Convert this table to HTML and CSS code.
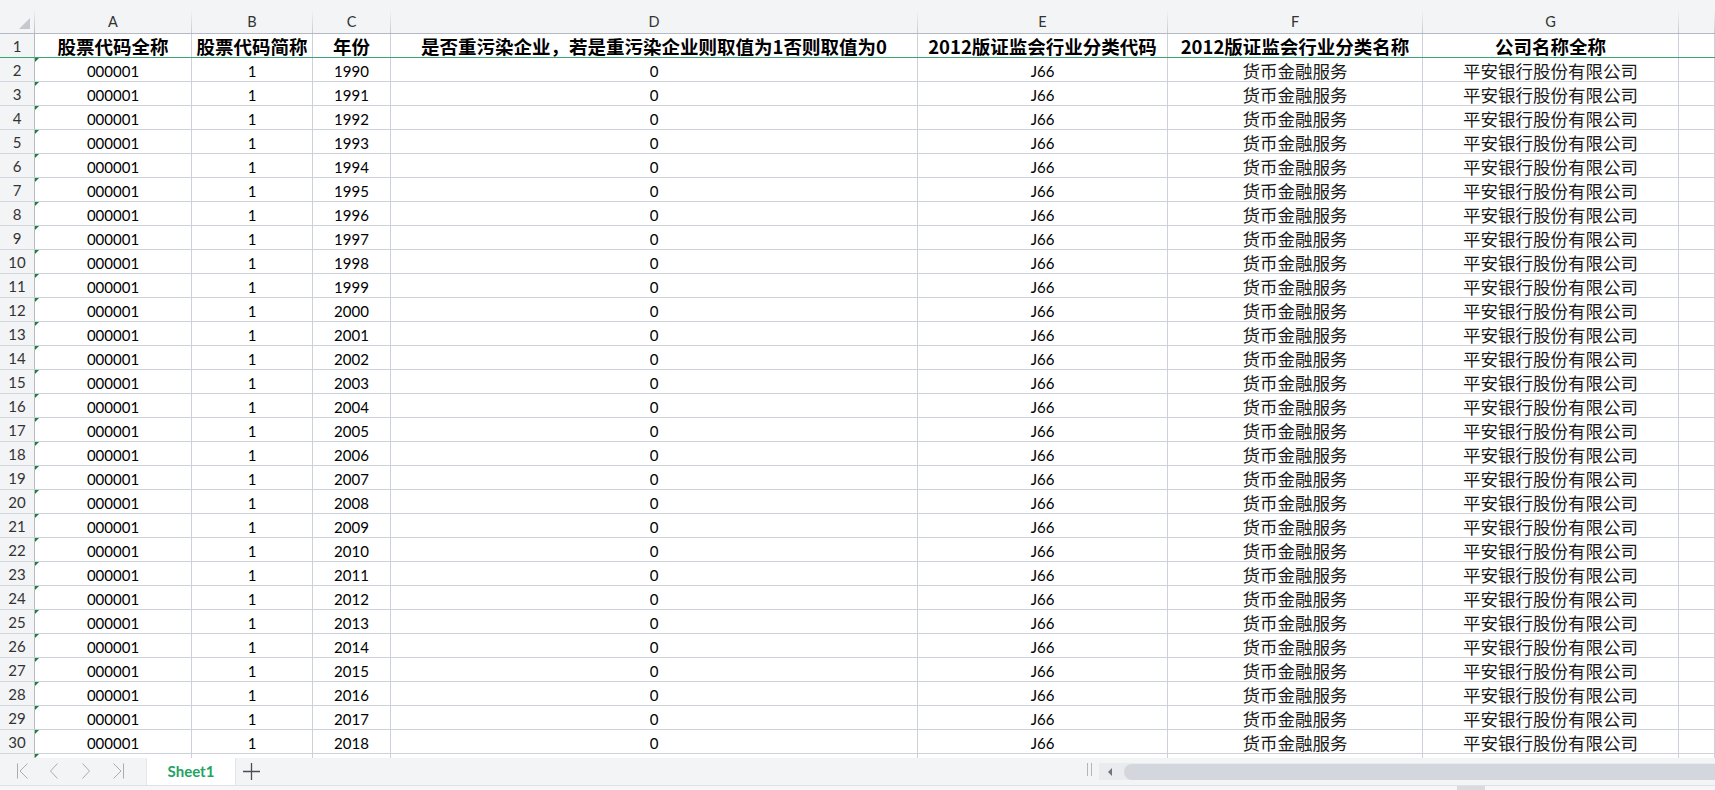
FILE: index.html
```html
<!DOCTYPE html>
<html lang="zh-CN">
<head>
<meta charset="utf-8">
<title>Sheet1</title>
<link rel="stylesheet" href="styles.css">
</head>
<body>
<div class="app">
  <div class="sheet">
    <div class="row colhdr">
      <div class="corner"><span class="corner-tri"></span></div>
      <div class="ch">A</div><div class="ch">B</div><div class="ch">C</div><div class="ch">D</div><div class="ch">E</div><div class="ch">F</div><div class="ch">G</div><div class="ch"></div>
    </div>
    <div class="row hdr1">
      <div class="rh">1</div>
      <div class="c hb">股票代码全称</div>
      <div class="c hb">股票代码简称</div>
      <div class="c hb">年份</div>
      <div class="c hb">是否重污染企业，若是重污染企业则取值为1否则取值为0</div>
      <div class="c hb">2012版证监会行业分类代码</div>
      <div class="c hb">2012版证监会行业分类名称</div>
      <div class="c hb">公司名称全称</div>
      <div class="c"></div>
    </div>
    <div class="row"><div class="rh">2</div><div class="c a">000001</div><div class="c">1</div><div class="c">1990</div><div class="c">0</div><div class="c">J66</div><div class="c cj">货币金融服务</div><div class="c cj">平安银行股份有限公司</div><div class="c"></div></div>
    <div class="row"><div class="rh">3</div><div class="c a">000001</div><div class="c">1</div><div class="c">1991</div><div class="c">0</div><div class="c">J66</div><div class="c cj">货币金融服务</div><div class="c cj">平安银行股份有限公司</div><div class="c"></div></div>
    <div class="row"><div class="rh">4</div><div class="c a">000001</div><div class="c">1</div><div class="c">1992</div><div class="c">0</div><div class="c">J66</div><div class="c cj">货币金融服务</div><div class="c cj">平安银行股份有限公司</div><div class="c"></div></div>
    <div class="row"><div class="rh">5</div><div class="c a">000001</div><div class="c">1</div><div class="c">1993</div><div class="c">0</div><div class="c">J66</div><div class="c cj">货币金融服务</div><div class="c cj">平安银行股份有限公司</div><div class="c"></div></div>
    <div class="row"><div class="rh">6</div><div class="c a">000001</div><div class="c">1</div><div class="c">1994</div><div class="c">0</div><div class="c">J66</div><div class="c cj">货币金融服务</div><div class="c cj">平安银行股份有限公司</div><div class="c"></div></div>
    <div class="row"><div class="rh">7</div><div class="c a">000001</div><div class="c">1</div><div class="c">1995</div><div class="c">0</div><div class="c">J66</div><div class="c cj">货币金融服务</div><div class="c cj">平安银行股份有限公司</div><div class="c"></div></div>
    <div class="row"><div class="rh">8</div><div class="c a">000001</div><div class="c">1</div><div class="c">1996</div><div class="c">0</div><div class="c">J66</div><div class="c cj">货币金融服务</div><div class="c cj">平安银行股份有限公司</div><div class="c"></div></div>
    <div class="row"><div class="rh">9</div><div class="c a">000001</div><div class="c">1</div><div class="c">1997</div><div class="c">0</div><div class="c">J66</div><div class="c cj">货币金融服务</div><div class="c cj">平安银行股份有限公司</div><div class="c"></div></div>
    <div class="row"><div class="rh">10</div><div class="c a">000001</div><div class="c">1</div><div class="c">1998</div><div class="c">0</div><div class="c">J66</div><div class="c cj">货币金融服务</div><div class="c cj">平安银行股份有限公司</div><div class="c"></div></div>
    <div class="row"><div class="rh">11</div><div class="c a">000001</div><div class="c">1</div><div class="c">1999</div><div class="c">0</div><div class="c">J66</div><div class="c cj">货币金融服务</div><div class="c cj">平安银行股份有限公司</div><div class="c"></div></div>
    <div class="row"><div class="rh">12</div><div class="c a">000001</div><div class="c">1</div><div class="c">2000</div><div class="c">0</div><div class="c">J66</div><div class="c cj">货币金融服务</div><div class="c cj">平安银行股份有限公司</div><div class="c"></div></div>
    <div class="row"><div class="rh">13</div><div class="c a">000001</div><div class="c">1</div><div class="c">2001</div><div class="c">0</div><div class="c">J66</div><div class="c cj">货币金融服务</div><div class="c cj">平安银行股份有限公司</div><div class="c"></div></div>
    <div class="row"><div class="rh">14</div><div class="c a">000001</div><div class="c">1</div><div class="c">2002</div><div class="c">0</div><div class="c">J66</div><div class="c cj">货币金融服务</div><div class="c cj">平安银行股份有限公司</div><div class="c"></div></div>
    <div class="row"><div class="rh">15</div><div class="c a">000001</div><div class="c">1</div><div class="c">2003</div><div class="c">0</div><div class="c">J66</div><div class="c cj">货币金融服务</div><div class="c cj">平安银行股份有限公司</div><div class="c"></div></div>
    <div class="row"><div class="rh">16</div><div class="c a">000001</div><div class="c">1</div><div class="c">2004</div><div class="c">0</div><div class="c">J66</div><div class="c cj">货币金融服务</div><div class="c cj">平安银行股份有限公司</div><div class="c"></div></div>
    <div class="row"><div class="rh">17</div><div class="c a">000001</div><div class="c">1</div><div class="c">2005</div><div class="c">0</div><div class="c">J66</div><div class="c cj">货币金融服务</div><div class="c cj">平安银行股份有限公司</div><div class="c"></div></div>
    <div class="row"><div class="rh">18</div><div class="c a">000001</div><div class="c">1</div><div class="c">2006</div><div class="c">0</div><div class="c">J66</div><div class="c cj">货币金融服务</div><div class="c cj">平安银行股份有限公司</div><div class="c"></div></div>
    <div class="row"><div class="rh">19</div><div class="c a">000001</div><div class="c">1</div><div class="c">2007</div><div class="c">0</div><div class="c">J66</div><div class="c cj">货币金融服务</div><div class="c cj">平安银行股份有限公司</div><div class="c"></div></div>
    <div class="row"><div class="rh">20</div><div class="c a">000001</div><div class="c">1</div><div class="c">2008</div><div class="c">0</div><div class="c">J66</div><div class="c cj">货币金融服务</div><div class="c cj">平安银行股份有限公司</div><div class="c"></div></div>
    <div class="row"><div class="rh">21</div><div class="c a">000001</div><div class="c">1</div><div class="c">2009</div><div class="c">0</div><div class="c">J66</div><div class="c cj">货币金融服务</div><div class="c cj">平安银行股份有限公司</div><div class="c"></div></div>
    <div class="row"><div class="rh">22</div><div class="c a">000001</div><div class="c">1</div><div class="c">2010</div><div class="c">0</div><div class="c">J66</div><div class="c cj">货币金融服务</div><div class="c cj">平安银行股份有限公司</div><div class="c"></div></div>
    <div class="row"><div class="rh">23</div><div class="c a">000001</div><div class="c">1</div><div class="c">2011</div><div class="c">0</div><div class="c">J66</div><div class="c cj">货币金融服务</div><div class="c cj">平安银行股份有限公司</div><div class="c"></div></div>
    <div class="row"><div class="rh">24</div><div class="c a">000001</div><div class="c">1</div><div class="c">2012</div><div class="c">0</div><div class="c">J66</div><div class="c cj">货币金融服务</div><div class="c cj">平安银行股份有限公司</div><div class="c"></div></div>
    <div class="row"><div class="rh">25</div><div class="c a">000001</div><div class="c">1</div><div class="c">2013</div><div class="c">0</div><div class="c">J66</div><div class="c cj">货币金融服务</div><div class="c cj">平安银行股份有限公司</div><div class="c"></div></div>
    <div class="row"><div class="rh">26</div><div class="c a">000001</div><div class="c">1</div><div class="c">2014</div><div class="c">0</div><div class="c">J66</div><div class="c cj">货币金融服务</div><div class="c cj">平安银行股份有限公司</div><div class="c"></div></div>
    <div class="row"><div class="rh">27</div><div class="c a">000001</div><div class="c">1</div><div class="c">2015</div><div class="c">0</div><div class="c">J66</div><div class="c cj">货币金融服务</div><div class="c cj">平安银行股份有限公司</div><div class="c"></div></div>
    <div class="row"><div class="rh">28</div><div class="c a">000001</div><div class="c">1</div><div class="c">2016</div><div class="c">0</div><div class="c">J66</div><div class="c cj">货币金融服务</div><div class="c cj">平安银行股份有限公司</div><div class="c"></div></div>
    <div class="row"><div class="rh">29</div><div class="c a">000001</div><div class="c">1</div><div class="c">2017</div><div class="c">0</div><div class="c">J66</div><div class="c cj">货币金融服务</div><div class="c cj">平安银行股份有限公司</div><div class="c"></div></div>
    <div class="row"><div class="rh">30</div><div class="c a">000001</div><div class="c">1</div><div class="c">2018</div><div class="c">0</div><div class="c">J66</div><div class="c cj">货币金融服务</div><div class="c cj">平安银行股份有限公司</div><div class="c"></div></div>
    <div class="row"><div class="rh"></div><div class="c a"></div><div class="c"></div><div class="c"></div><div class="c"></div><div class="c"></div><div class="c"></div><div class="c"></div><div class="c"></div></div>
  </div>

  <div class="tabbar">
    <div class="nav">
      <span class="navbtn"><svg width="13" height="16" viewBox="0 0 13 16"><path d="M1.5 0.5V15.5M11.5 0.5L4 8L11.5 15.5" fill="none" stroke="#a9acb3" stroke-width="1"/></svg></span>
      <span class="navbtn"><svg width="10" height="16" viewBox="0 0 10 16"><path d="M8.5 0.5L1.5 8L8.5 15.5" fill="none" stroke="#a9acb3" stroke-width="1"/></svg></span>
      <span class="navbtn"><svg width="10" height="16" viewBox="0 0 10 16"><path d="M1.5 0.5L8.5 8L1.5 15.5" fill="none" stroke="#a9acb3" stroke-width="1"/></svg></span>
      <span class="navbtn"><svg width="13" height="16" viewBox="0 0 13 16"><path d="M1.5 0.5L9 8L1.5 15.5M11.5 0.5V15.5" fill="none" stroke="#a9acb3" stroke-width="1"/></svg></span>
    </div>
    <div class="tab">Sheet1</div>
    <div class="add"><svg width="17" height="17" viewBox="0 0 17 17"><path d="M8.5 0V17M0 8.5H17" fill="none" stroke="#4b4e56" stroke-width="1.3"/></svg></div>
    <div class="spacer"></div>
    <div class="split"></div>
    <div class="hscroll">
      <span class="larrow"></span>
      <div class="thumb"></div>
    </div>
  </div>
  <div class="status"><span class="vgrip"></span></div>
</div>
</body>
</html>
```

FILE: styles.css
```css
* { box-sizing: border-box; }

html, body {
  margin: 0;
  padding: 0;
}

body {
  width: 1715px;
  height: 790px;
  overflow: hidden;
  background: #f3f4f6;
  font-family: Lato, "Noto Sans CJK SC", sans-serif;
  color: #000;
}

.app {
  display: flex;
  flex-direction: column;
  height: 790px;
}

.sheet {
  height: 758px;
  overflow: hidden;
  background: #fff;
  flex: none;
}

.row {
  display: grid;
  grid-template-columns: 35px 157px 121px 78px 527px 250px 255px 256px 1fr;
  height: 24px;
}

/* column header */
.colhdr {
  height: 34px;
  background: #f3f4f6;
  border-bottom: 1px solid #b5b9c3;
}

.corner {
  border-right: 1px solid #b5b9c3;
  border-image: linear-gradient(to bottom, #f3f4f6 0%, #f3f4f6 30%, #b5b9c3 100%) 1;
  display: flex;
  align-items: flex-end;
  justify-content: flex-end;
  padding: 0 4px 4px 0;
}

.corner-tri {
  width: 0;
  height: 0;
  border-left: 11px solid transparent;
  border-bottom: 11px solid #c5c8ce;
}

.ch {
  padding-top: 11px;
  line-height: 22px;
  text-align: center;
  font-size: 14.5px;
  color: #333;
  border-right: 1px solid #c4c8d0;
  border-image: linear-gradient(to bottom, #f3f4f6 0%, #f3f4f6 30%, #c4c8d0 100%) 1;
}

/* row header cells */
.rh {
  background: #f3f4f6;
  border-right: 1px solid #b5b9c3;
  border-bottom: 1px solid #d3d6dd;
  font-size: 15px;
  line-height: 18px;
  color: #333;
  display: flex;
  align-items: center;
  justify-content: center;
  padding-top: 1px;
}

/* data cells */
.c {
  border-right: 1px solid #cdd1da;
  border-bottom: 1px solid #cdd1da;
  font-size: 15px;
  line-height: 18px;
  display: flex;
  align-items: center;
  justify-content: center;
  padding-top: 2px;
  white-space: nowrap;
  position: relative;
}

.a::before {
  content: "";
  position: absolute;
  left: 0;
  top: 0;
  width: 0;
  height: 0;
  border-top: 4px solid #1b7f3a;
  border-right: 4px solid transparent;
}

.cj {
  font-family: "Noto Sans CJK SC", sans-serif;
  font-size: 17.5px;
  line-height: 19px;
  font-weight: 400;
  color: #1a1a1a;
}

/* first (frozen) row */
.hdr1 {
  border-bottom: 1px solid #3aa572;
  height: 24px;
}

.hdr1 .rh,
.hdr1 .c {
  border-bottom: none;
}

.hb {
  font-family: "Noto Sans CJK SC", sans-serif;
  font-weight: 700;
  font-size: 18.5px;
  line-height: 20px;
  color: #000;
  padding-top: 1px;
}

/* sheet tab bar */
.tabbar {
  flex: none;
  height: 28px;
  display: flex;
  align-items: stretch;
  background: #f3f4f6;
  border-bottom: 1px solid #dfe1e5;
}

.nav {
  display: flex;
  padding-left: 6px;
}

.navbtn {
  width: 32px;
  display: flex;
  align-items: center;
  justify-content: center;
  padding-bottom: 1px;
}

.tab {
  margin-left: 12px;
  width: 90px;
  background: #fff;
  border-left: 1px solid #e3e5e9;
  border-right: 1px solid #e3e5e9;
  color: #1fa463;
  font-weight: 700;
  font-size: 15px;
  display: flex;
  align-items: center;
  justify-content: center;
  padding-bottom: 1px;
}

.add {
  width: 30px;
  display: flex;
  align-items: center;
  justify-content: center;
}

.spacer {
  flex: 1;
}

.split {
  width: 12px;
  margin: 5px 0 9px;
  border-left: 1px solid #b3b6bd;
  position: relative;
}

.split::after {
  content: "";
  position: absolute;
  left: 3px;
  top: 0;
  bottom: 0;
  border-left: 1px solid #b3b6bd;
}

.hscroll {
  width: 616px;
  margin: 5px 0 5px;
  background: #e9ebef;
  display: flex;
  align-items: center;
}

.larrow {
  width: 0;
  height: 0;
  margin-left: 9px;
  border-top: 4px solid transparent;
  border-bottom: 4px solid transparent;
  border-right: 4px solid #70747c;
}

.thumb {
  margin-left: 12px;
  flex: 1;
  height: 16px;
  background: #d3d6dc;
  border-radius: 8px 0 0 8px;
}

.status {
  flex: 1;
  background: #f6f7f9;
  display: flex;
}

.vgrip {
  margin-left: 1457px;
  width: 28px;
  background: #d9dbe0;
}
```
